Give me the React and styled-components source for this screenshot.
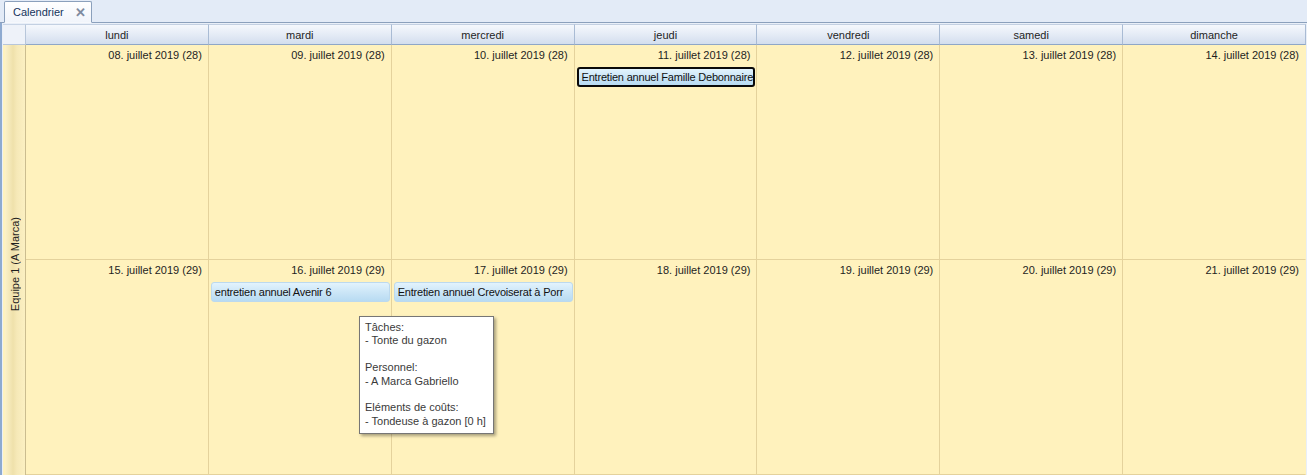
import styled, { createGlobalStyle } from 'styled-components';

const GlobalStyle = createGlobalStyle`
	html, body {
		margin: 0;
		padding: 0;
		overflow: hidden;
	}
	body {
		font-family: 'Liberation Sans', Arial, sans-serif;
		font-size: 11px;
		color: #1e1e1e;
		background: #e3ebf7;
	}
`;

const days = ['lundi', 'mardi', 'mercredi', 'jeudi', 'vendredi', 'samedi', 'dimanche'];

const weeks = [
	{
		dates: [8, 9, 10, 11, 12, 13, 14].map((d) => `${String(d).padStart(2, '0')}. juillet 2019 (28)`),
		events: { 3: [{ text: 'Entretien annuel Famille Debonnaire', selected: true }] },
	},
	{
		dates: [15, 16, 17, 18, 19, 20, 21].map((d) => `${d}. juillet 2019 (29)`),
		events: {
			1: [{ text: 'entretien annuel Avenir 6' }],
			2: [{ text: 'Entretien annuel Crevoiserat à Porr' }],
		},
	},
];

const App = () => {
	return (
		<>
			<GlobalStyle />
			<Page>
				<TabStrip>
					<Tab>
						<span>Calendrier</span>
						<Close>✕</Close>
					</Tab>
				</TabStrip>
				<Frame>
					<Scheduler>
						<Corner />
						{days.map((d) => (
							<DayHeader key={d}>{d}</DayHeader>
						))}
						<Resource>
							<ResourceLabel>Equipe 1 (A Marca)</ResourceLabel>
						</Resource>
						{weeks.map((w, wi) =>
							w.dates.map((date, di) => (
								<Cell key={`${wi}-${di}`} $last={di === 6}>
									<DateLabel>{date}</DateLabel>
									{(w.events[di] || []).map((ev) => (
										<Event key={ev.text} $selected={ev.selected}>
											{ev.text}
										</Event>
									))}
								</Cell>
							))
						)}
					</Scheduler>
					<Tooltip>
						<p>Tâches:</p>
						<p>- Tonte du gazon</p>
						<br />
						<p>Personnel:</p>
						<p>- A Marca Gabriello</p>
						<br />
						<p>Eléments de coûts:</p>
						<p>- Tondeuse à gazon [0 h]</p>
					</Tooltip>
				</Frame>
			</Page>
		</>
	);
};

export default App;

const Page = styled.div`
	width: 1307px;
	height: 475px;
	display: flex;
	flex-direction: column;
	overflow: hidden;
`;

const TabStrip = styled.div`
	height: 22px;
	display: flex;
	align-items: flex-end;
	padding-left: 4px;
	border-bottom: 1px solid #8ba0bc;
	background: #e3ebf7;
`;

const Tab = styled.div`
	height: 20px;
	display: flex;
	align-items: center;
	gap: 11px;
	padding: 0 5px 0 8px;
	margin-bottom: -1px;
	border: 1px solid #8ba0bc;
	border-bottom: 1px solid #f6f8fc;
	border-radius: 2px 2px 0 0;
	background: linear-gradient(#ffffff, #f1f5fb);
	color: #15345c;
	font-size: 11px;
`;

const Close = styled.span`
	color: #7f8ba0;
	font-weight: bold;
	font-size: 13px;
	line-height: 1;
`;

const Frame = styled.div`
	position: relative;
	flex: 1;
	display: flex;
	border-left: 2px solid #8eaad0;
	background: #e9eff8;
	padding: 1px 1px 0 1px;
`;

const Scheduler = styled.div`
	flex: 1;
	display: grid;
	grid-template-columns: 23px repeat(7, 1fr);
	grid-template-rows: 21px 215px 215px;
	background: #fff2bd;
`;

const Corner = styled.div`
	background: #eef2f9;
	border-right: 1px solid #b7c6da;
	border-bottom: 1px solid #b7c6da;
	border-top: 1px solid #c9d5e6;
`;

const DayHeader = styled.div`
	display: flex;
	align-items: center;
	justify-content: center;
	background: linear-gradient(#f5f8fd, #e3eaf5 55%, #d3deee);
	border-top: 1px solid #c3d0e2;
	border-right: 1px solid #a9bbd4;
	border-bottom: 1px solid #8fa7c7;
	color: #1e1e1e;
`;

const Resource = styled.div`
	grid-row: 2 / span 2;
	display: flex;
	align-items: center;
	justify-content: center;
	background: linear-gradient(90deg, #fbf1c9, #efe1ab 40%, #f6e9b8 60%, #fbf0c2);
	border-right: 1px solid #cbbd8f;
	margin-left: 2px;
`;

const ResourceLabel = styled.span`
	writing-mode: vertical-rl;
	transform: rotate(180deg);
	white-space: nowrap;
	margin-top: 8px;
	color: #1e1e1e;
`;

const Cell = styled.div`
	display: flex;
	flex-direction: column;
	min-width: 0;
	padding: 3px 1px 0 2px;
	border-right: 1px solid ${(p) => (p.$last ? '#fff2bd' : '#e4d29c')};
	border-bottom: 1px solid #e4d29c;
	background: #fff2bd;
	overflow: hidden;
`;

const DateLabel = styled.div`
	text-align: right;
	padding-right: 5px;
	height: 14px;
	line-height: 14px;
	margin-bottom: 5px;
`;

const Event = styled.div`
	height: 20px;
	box-sizing: border-box;
	padding: 0 2px 0 3px;
	white-space: nowrap;
	overflow: hidden;
	letter-spacing: -0.2px;
	border-radius: 3px;
	background: linear-gradient(#e2f3fd, #cce6f7 50%, #b8dbf2);
	border: ${(p) => (p.$selected ? '2px solid #0a0a0a' : '1px solid #bcd9ee')};
	line-height: ${(p) => (p.$selected ? '17px' : '18px')};
	color: #111;
`;

const Tooltip = styled.div`
	position: absolute;
	left: 357px;
	top: 293px;
	width: 123px;
	padding: 4px 5px 5px 5px;
	background: #ffffff;
	border: 1px solid #767676;
	box-shadow: 2px 2px 3px rgba(0, 0, 0, 0.35);
	color: #3a3a3a;
	line-height: 13.4px;

	p {
		margin: 0;
		white-space: nowrap;
	}
	br {
		display: block;
		content: '';
		height: 13.4px;
	}
`;
